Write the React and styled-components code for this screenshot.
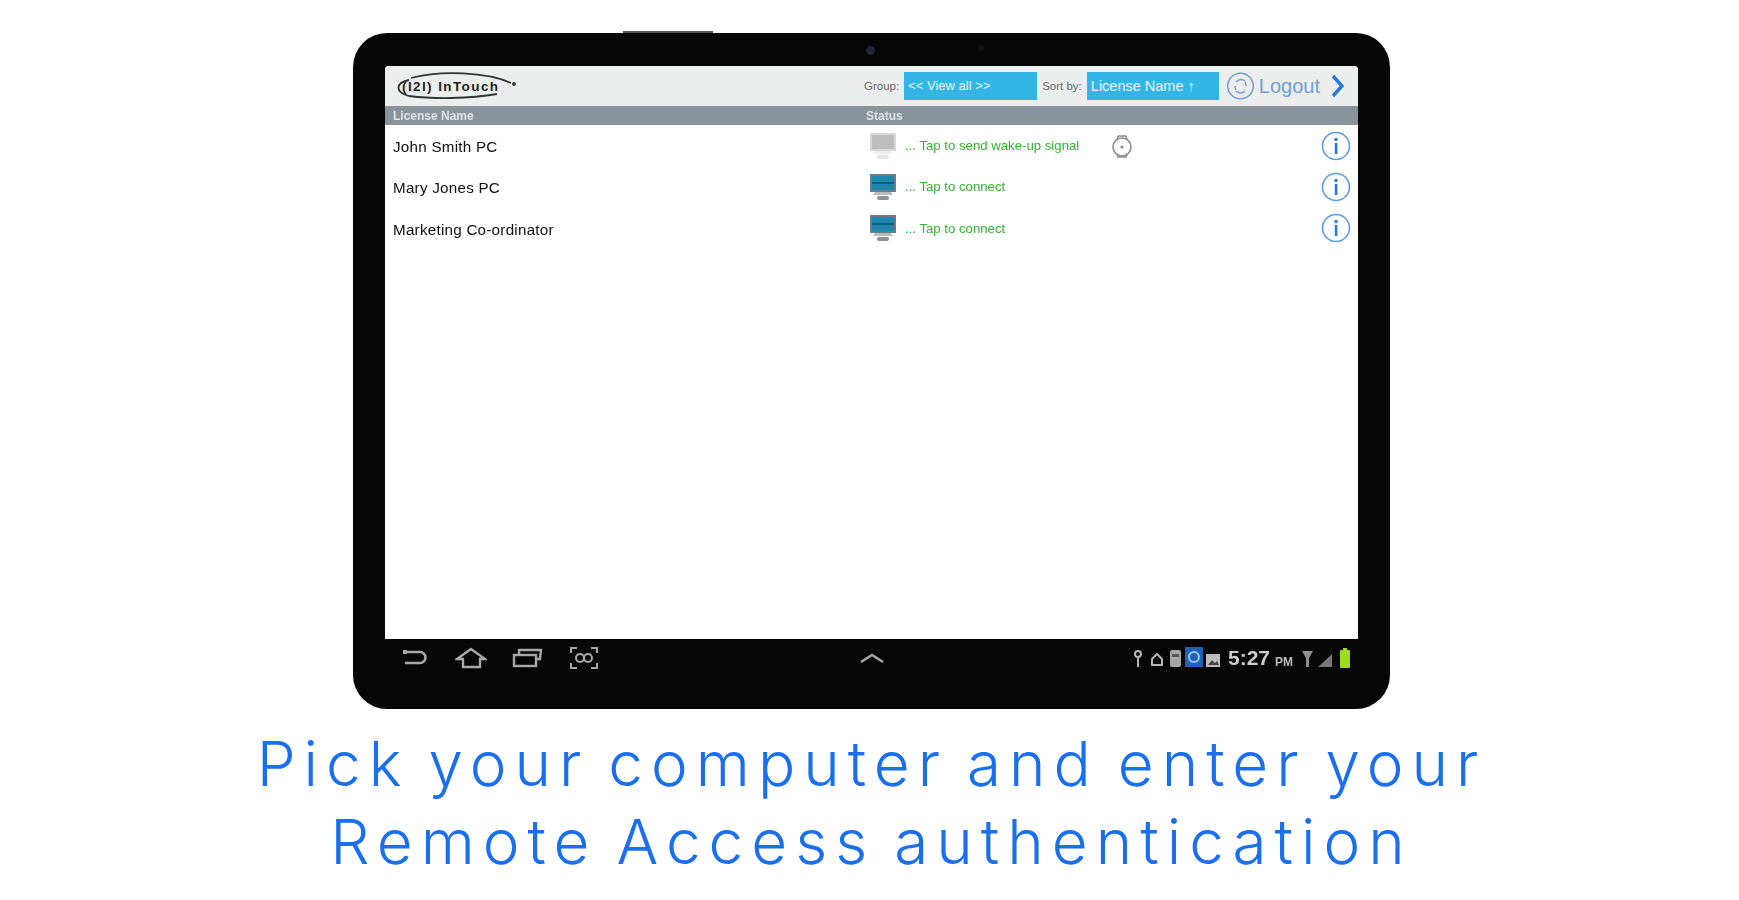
import React from 'react'
import styled, { createGlobalStyle } from 'styled-components'

const Global = createGlobalStyle`
  html, body { margin: 0; padding: 0; background: #fff; }
  body { font-family: "Liberation Sans", Arial, sans-serif; }
`

const Page = styled.div`
  width: 1739px;
  height: 900px;
  overflow: hidden;
  display: flex;
  flex-direction: column;
  align-items: center;
  padding: 33px 0 0 4px;
  box-sizing: border-box;
  filter: blur(0.7px);
`
const Tablet = styled.div`
  position: relative;
  width: 1037px;
  height: 676px;
  box-sizing: border-box;
  padding: 33px 32px 0 32px;
  background: #060606;
  border-radius: 34px;
  display: flex;
  flex-direction: column;
`
const SideButton = styled.div`
  position: absolute;
  top: -2px;
  left: 270px;
  width: 90px;
  height: 2px;
  background: #555;
`
const Camera = styled.div`
  position: absolute;
  top: ${p => p.$top}px;
  left: ${p => p.$left}px;
  width: ${p => p.$size}px;
  height: ${p => p.$size}px;
  border-radius: 50%;
  background: ${p => p.$color};
`
const Screen = styled.div`
  height: 573px;
  background: #fff;
  display: flex;
  flex-direction: column;
  border-radius: 4px 4px 0 0;
  overflow: hidden;
`
const TopBar = styled.div`
  height: 40px;
  background: #eceeed;
  display: flex;
  align-items: center;
  padding: 0 13px 0 10px;
`
const Logo = styled.div`
  position: relative;
  width: 122px;
  height: 30px;
  display: flex;
  align-items: center;
  font-size: 13.5px;
  font-weight: 700;
  color: #222;
  letter-spacing: 1.4px;
  padding-left: 7px;
  box-sizing: border-box;
  white-space: nowrap;
  svg { position: absolute; left: 0; top: 0; }
`
const Controls = styled.div`
  margin-left: auto;
  display: flex;
  align-items: center;
`
const FieldLabel = styled.span`
  font-size: 11.5px;
  color: #666;
  margin-right: ${p => p.$gap}px;
`
const Select = styled.div`
  width: ${p => p.$w}px;
  height: 28px;
  box-sizing: border-box;
  background: #33b5e5;
  color: #e8f7fd;
  font-size: ${p => p.$size}px;
  line-height: 28px;
  padding-left: 4px;
  margin-right: ${p => p.$gap}px;
  white-space: nowrap;
`
const LogoutText = styled.span`
  font-size: 20px;
  color: #6f9fd8;
  margin: 0 11px 0 5px;
`
const HeadRow = styled.div`
  height: 19px;
  background: #8a939b;
  display: grid;
  grid-template-columns: 473px 1fr;
  align-items: center;
  color: #dfe3e6;
  font-size: 12px;
  font-weight: 700;
  padding-left: 8px;
`
const Rows = styled.div`
  display: flex;
  flex-direction: column;
`
const Row = styled.div`
  height: 41.3px;
  display: grid;
  grid-template-columns: 473px 1fr 37px;
  align-items: center;
  padding-left: 8px;
`
const Name = styled.span`
  font-size: 15.2px;
  color: #111;
  letter-spacing: 0.25px;
  padding-top: 2px;
`
const Status = styled.div`
  display: flex;
  align-items: center;
  padding-left: 3px;
`
const Hint = styled.span`
  font-size: 13.2px;
  color: #2fb52f;
  margin-left: 8px;
`
const Watch = styled.span`
  display: flex;
  margin-left: 30px;
`
const InfoCell = styled.div`
  display: flex;
`
const NavBar = styled.div`
  height: 36px;
  margin-top: 1px;
  display: flex;
  align-items: center;
  padding: 0 8px 0 15px;
`
const NavKeys = styled.div`
  display: flex;
  gap: 25px;
  align-items: center;
  width: 459px;
`
const Tray = styled.div`
  margin-left: auto;
  display: flex;
  align-items: center;
`
const Clock = styled.span`
  font-size: 21px;
  font-weight: 700;
  color: #ccc;
  margin: 0 5px 0 8px;
`
const Meridiem = styled.span`
  font-size: 12px;
  font-weight: 700;
  color: #bbb;
  margin: 7px 9px 0 0;
`
const Caption = styled.div`
  margin-top: 16px;
  text-align: center;
  font-family: Inter, "Liberation Sans", sans-serif;
  font-weight: 300;
  font-size: 62px;
  line-height: 78px;
  letter-spacing: 8px;
  word-spacing: -6.4px;
  color: #1a6fef;
  white-space: nowrap;
`

const Monitor = ({ off }) => (
  <svg width="28" height="28" viewBox="0 0 28 28">
    <rect x="1" y="1" width="26" height="18" fill={off ? '#d8d8d8' : '#6a7c86'} />
    <rect x="3" y="3" width="22" height="14" fill={off ? '#bdbdbd' : '#1c86ad'} />
    {!off && <rect x="3" y="9" width="22" height="2" fill="#0c5f80" />}
    <path d="M6 19h16l2 3H4z" fill={off ? '#ededed' : '#b8bcbe'} />
    <rect x="8" y="23" width="12" height="4" rx="2" fill={off ? '#e4e4e4' : '#8d9295'} />
  </svg>
)

const InfoIcon = () => (
  <svg width="30" height="30" viewBox="0 0 30 30" fill="none">
    <circle cx="15" cy="15" r="13.5" stroke="#5b9be8" strokeWidth="1.6" />
    <rect x="13.8" y="12" width="2.6" height="11" fill="#2a78d8" />
    <circle cx="15" cy="8.5" r="1.7" fill="#2a78d8" />
  </svg>
)

const WatchIcon = () => (
  <svg width="26" height="28" viewBox="0 0 26 28" fill="none" stroke="#8c8c8c" strokeWidth="1.6">
    <path d="M9 4h8l1 4M9 4L8 8M8 22l1 3h8l1-3" />
    <circle cx="13" cy="15" r="9" fill="#fff" />
    <circle cx="13" cy="15" r="0.8" fill="#8c8c8c" />
  </svg>
)

const LogoutIcon = () => (
  <svg width="27" height="28" viewBox="0 0 27 28" fill="none" stroke="#6f9fd8" strokeWidth="1.5">
    <circle cx="13.5" cy="14" r="12.8" />
    <path d="M9 10a6 6 0 0 1 9-1M18 19a6 6 0 0 1-9 0M8 14a6 6 0 0 0 1 4M19 14a6 6 0 0 0-1-4" />
  </svg>
)

const Chevron = () => (
  <svg width="14" height="24" viewBox="0 0 14 24" fill="none" stroke="#2a78d8" strokeWidth="3.4">
    <path d="M2 2l9 10-9 10" />
  </svg>
)

const BackKey = () => (
  <svg width="30" height="24" viewBox="0 0 30 24" fill="none" stroke="#a8a8a8" strokeWidth="2.6">
    <path d="M5 6h15a5 5 0 0 1 0 11H5" />
    <path d="M3 6h4" strokeWidth="4" />
  </svg>
)
const HomeKey = () => (
  <svg width="32" height="24" viewBox="0 0 32 24" fill="none" stroke="#a8a8a8" strokeWidth="2.4">
    <path d="M2 13L16 3l14 10H25v8H8v-8z" />
  </svg>
)
const RecentKey = () => (
  <svg width="32" height="24" viewBox="0 0 32 24" fill="none" stroke="#a8a8a8" strokeWidth="2.4">
    <rect x="2" y="9" width="22" height="11" />
    <path d="M7 9V4h22l-1 9h-4" />
  </svg>
)
const ShotKey = () => (
  <svg width="30" height="24" viewBox="0 0 30 24" fill="none" stroke="#a8a8a8" strokeWidth="2">
    <path d="M2 7V2h6M22 2h6v5M28 17v5h-6M8 22H2v-5" />
    <circle cx="11" cy="12" r="4" />
    <circle cx="19" cy="12" r="4" />
  </svg>
)
const UpKey = () => (
  <svg width="26" height="14" viewBox="0 0 26 14" fill="none" stroke="#a8a8a8" strokeWidth="2.4">
    <path d="M2 11l11-7 11 7" />
  </svg>
)

const TrayIcons = () => (
  <svg width="87" height="24" viewBox="0 0 87 24">
    <path d="M2 8a3 3 0 1 1 6 0 3 3 0 0 1-6 0zM5 11v10" stroke="#b5b5b5" strokeWidth="2" fill="none" />
    <path d="M19 19v-6l5-5 5 5v6z" stroke="#b5b5b5" strokeWidth="2" fill="none" />
    <rect x="37" y="4" width="11" height="17" rx="2" fill="#a6a6a6" />
    <rect x="39" y="8" width="7" height="3" fill="#555" />
    <rect x="52" y="1" width="18" height="20" fill="#1f63b8" />
    <circle cx="61" cy="11" r="5" fill="none" stroke="#9cc6f0" strokeWidth="2" />
    <rect x="73" y="8" width="14" height="13" fill="#bdbdbd" />
    <path d="M75 19l4-5 3 3 2-2 2 4z" fill="#444" />
  </svg>
)

const SignalIcons = () => (
  <svg width="48" height="24" viewBox="0 0 48 24">
    <path d="M0 5h11L7 12v9H4v-9z" fill="#8f8f8f" />
    <path d="M16 21L30 8v13z" fill="#777" />
    <rect x="38" y="4" width="10" height="18" rx="1" fill="#9fdc1c" />
    <rect x="41" y="2" width="4" height="2" fill="#9fdc1c" />
  </svg>
)

const rows = [
  { name: 'John Smith PC', off: true, hint: '... Tap to send wake-up signal' },
  { name: 'Mary Jones PC', hint: '... Tap to connect' },
  { name: 'Marketing Co-ordinator', hint: '... Tap to connect' },
]

export default function App() {
  return (
    <Page>
      <Global />
      <Tablet>
        <SideButton />
        <Camera $top={13} $left={513} $size={9} $color="#23233a" />
        <Camera $top={12} $left={625} $size={6} $color="#141418" />
        <Screen>
          <TopBar>
            <Logo>
              <svg width="122" height="30" viewBox="0 0 122 30" fill="none" stroke="#333" strokeWidth="1.8">
                <path d="M16 7C46 -1 92 1 116 12" />
                <circle cx="119" cy="13" r="1" fill="#333" />
                <path d="M14 9C0 12 0 21 14 25c24 3 60 3 88-2" />
              </svg>
              <span>(I2I) InTouch</span>
            </Logo>
            <Controls>
              <FieldLabel $gap={5}>Group:</FieldLabel>
              <Select $w={133} $size={13} $gap={5}>&lt;&lt; View all &gt;&gt;</Select>
              <FieldLabel $gap={5}>Sort by:</FieldLabel>
              <Select $w={132} $size={14.5} $gap={8}>License Name ↑</Select>
              <LogoutIcon />
              <LogoutText>Logout</LogoutText>
              <Chevron />
            </Controls>
          </TopBar>
          <HeadRow>
            <span>License Name</span>
            <span>Status</span>
          </HeadRow>
          <Rows>
            {rows.map(r => (
              <Row key={r.name}>
                <Name>{r.name}</Name>
                <Status>
                  <Monitor off={r.off} />
                  <Hint>{r.hint}</Hint>
                  {r.off && <Watch><WatchIcon /></Watch>}
                </Status>
                <InfoCell><InfoIcon /></InfoCell>
              </Row>
            ))}
          </Rows>
        </Screen>
        <NavBar>
          <NavKeys>
            <BackKey />
            <HomeKey />
            <RecentKey />
            <ShotKey />
          </NavKeys>
          <UpKey />
          <Tray>
            <TrayIcons />
            <Clock>5:27</Clock>
            <Meridiem>PM</Meridiem>
            <SignalIcons />
          </Tray>
        </NavBar>
      </Tablet>
      <Caption>
        Pick your computer and enter your
        <br />
        Remote Access authentication
      </Caption>
    </Page>
  )
}
